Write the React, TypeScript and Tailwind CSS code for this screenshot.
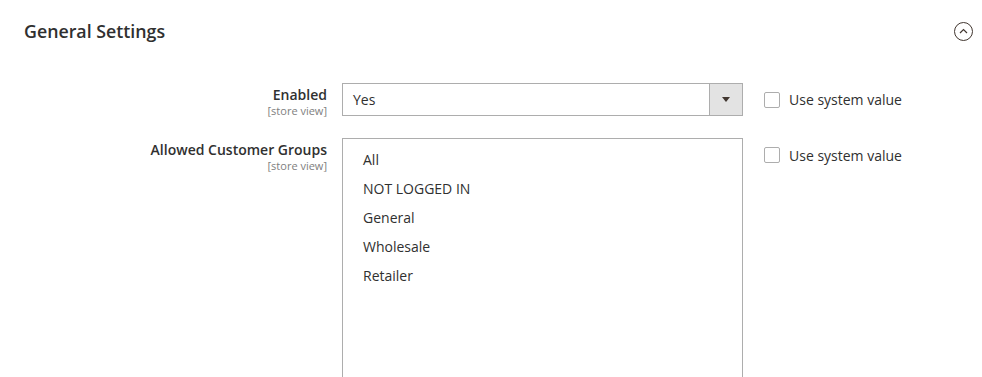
const groups = ['All', 'NOT LOGGED IN', 'General', 'Wholesale', 'Retailer'];

function FieldLabel({ title }: { title: string }) {
  return (
    <div className="w-[327px] shrink-0 text-right">
      <div className="text-[14px] font-semibold leading-[18px] text-[#303030]">{title}</div>
      <div className="text-[11px] leading-[13px] text-[#808080]">[store view]</div>
    </div>
  );
}

function SystemValue() {
  return (
    <label className="ml-[21px] flex items-center gap-[9px] text-[14px] text-[#303030]">
      <span className="h-[16px] w-[16px] rounded-[2px] border border-[#adadad] bg-white" />
      Use system value
    </label>
  );
}

export default function App() {
  return (
    <div
      className="h-[377px] w-[982px] overflow-hidden bg-white"
      style={{ fontFamily: '"Open Sans", "Liberation Sans", sans-serif' }}
    >
      <div className="flex h-[62px] items-center justify-between pl-[24px] pr-[9px]">
        <h2 className="text-[17.8px] font-semibold text-[#303030]">General Settings</h2>
        <span className="flex h-[19px] w-[19px] items-center justify-center rounded-full border border-[#41362f]">
          <svg width="9" height="6" viewBox="0 0 9 6" fill="none">
            <path d="M1 5L4.5 1.5L8 5" stroke="#41362f" strokeWidth="1.2" />
          </svg>
        </span>
      </div>

      <div className="mt-[21px] flex items-start">
        <div className="pt-[3px]">
          <FieldLabel title="Enabled" />
        </div>
        <div className="ml-[15px] flex h-[33px] w-[401px] items-stretch border border-[#adadad]">
          <div className="flex flex-1 items-center pl-[10px] text-[14px] text-[#303030]">Yes</div>
          <div className="flex w-[33px] items-center justify-center border-l border-[#adadad] bg-[#e3e3e3]">
            <svg width="8" height="5" viewBox="0 0 8 5">
              <path d="M0 0H8L4 5Z" fill="#41362f" />
            </svg>
          </div>
        </div>
        <div className="flex h-[33px] items-center">
          <SystemValue />
        </div>
      </div>

      <div className="mt-[21px] flex items-start">
        <div className="pt-[3px]">
          <FieldLabel title="Allowed Customer Groups" />
        </div>
        <div className="ml-[15px] h-[260px] w-[401px] border border-[#adadad] pt-[6px]">
          {groups.map((g) => (
            <div key={g} className="flex h-[29px] items-center pl-[20px] text-[14px] text-[#303030]">
              {g}
            </div>
          ))}
        </div>
        <div className="flex h-[34px] items-center">
          <SystemValue />
        </div>
      </div>
    </div>
  );
}
